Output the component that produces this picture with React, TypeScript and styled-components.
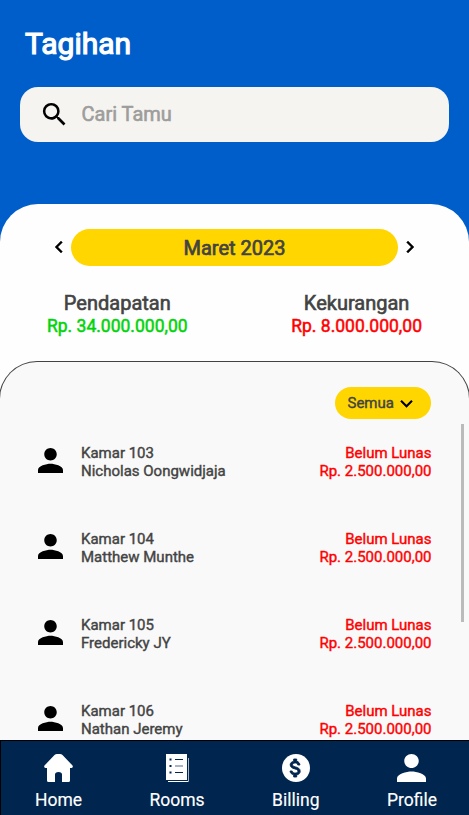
import React from "react";
import styled, { createGlobalStyle } from "styled-components";
import {
  MdAttachMoney,
  MdChevronLeft,
  MdChevronRight,
  MdKeyboardArrowDown,
  MdSearch,
} from "react-icons/md";

const GlobalStyle = createGlobalStyle`
  * { box-sizing: border-box; }
  body { margin: 0; font-family: Roboto, sans-serif; color: #434343; }
  h1, p, ul { margin: 0; padding: 0; }
  button { border: 0; padding: 0; background: none; font: inherit; color: inherit; }
`;

const Screen = styled.div`
  height: 815px;
  display: flex;
  flex-direction: column;
  overflow: hidden;
  background: #005ecb;
`;

const Header = styled.header`
  flex: none;
  height: 204px;
  padding: 26px 20px 0;
`;

const Title = styled.h1`
  padding-left: 5px;
  font-size: 30px;
  line-height: 36px;
  font-weight: 400;
  color: #fff;
  -webkit-text-stroke: 1.2px #fff;
`;

const SearchBox = styled.label`
  display: flex;
  align-items: center;
  height: 55px;
  margin-top: 25px;
  padding-left: 18px;
  border-radius: 18px;
  background: #f5f4f0;
  color: #000;
  svg { margin-left: 0.5px; }
`;

const SearchInput = styled.input`
  flex: 1;
  min-width: 0;
  height: 24px;
  margin: 0 0 1px 12px;
  padding: 0;
  border: 0;
  outline: 0;
  background: transparent;
  font: 400 20px/24px Roboto, sans-serif;
  &::placeholder {
    color: #9d9d9c;
    -webkit-text-stroke: 0.6px #9d9d9c;
  }
`;

const Panel = styled.main`
  flex: 1;
  min-height: 0;
  display: flex;
  flex-direction: column;
  padding-top: 25px;
  border-radius: 38px 38px 0 0;
  background: #fefefe;
`;

const MonthPicker = styled.div`
  flex: none;
  display: flex;
  align-items: center;
  justify-content: center;
  height: 37px;
`;

const ArrowButton = styled.button`
  display: flex;
  margin-bottom: 1px;
  color: #000;
  path:last-child { stroke: #000; stroke-width: 0.4px; }
`;

const Month = styled.div`
  width: 327px;
  height: 37px;
  border-radius: 19px;
  background: #ffd600;
  text-align: center;
  font-size: 20px;
  line-height: 38px;
  -webkit-text-stroke: 0.7px;
`;

const Totals = styled.section`
  flex: none;
  display: flex;
  justify-content: space-between;
  height: 95px;
  padding: 25px 47px 0;
  text-align: center;
`;

const TotalLabel = styled.p`
  font-size: 20px;
  line-height: 24px;
  -webkit-text-stroke: 0.6px;
`;

const TotalAmount = styled.p<{ $color: string }>`
  color: ${(p) => p.$color};
  font-size: 17.5px;
  line-height: 22px;
  -webkit-text-stroke: 0.5px;
`;

const ListPanel = styled.section`
  position: relative;
  flex: 1;
  min-height: 0;
  overflow: hidden;
  margin: 0 -1px;
  padding: 25px 38px 0;
  border: 1px solid #434343;
  border-bottom: 0;
  border-radius: 38px 38px 0 0;
  background: #f9f9f9;
`;

const Filter = styled.button`
  display: flex;
  align-items: center;
  width: 96px;
  height: 32px;
  margin-left: auto;
  padding-left: 12.5px;
  border-radius: 16px;
  background: #ffd600;
  font-size: 15px;
  -webkit-text-stroke: 0.4px;
  svg { color: #000; }
`;

const Guests = styled.ul`
  list-style: none;
  padding-top: 25px;
`;

const Guest = styled.li`
  display: flex;
  height: 86px;
  font-size: 15px;
  line-height: 18px;
  -webkit-text-stroke: 0.4px;
`;

const Avatar = styled.svg`
  width: 25px;
  height: 25px;
  margin-top: 4px;
  fill: #000;
  stroke: none;
`;

const GuestInfo = styled.div`
  margin-left: 18px;
`;

const Bill = styled.div`
  margin: 0 -0.5px 0 auto;
  text-align: right;
  color: #f00;
`;

const ScrollThumb = styled.div`
  position: absolute;
  top: 62px;
  right: 5px;
  width: 3px;
  height: 198px;
  background: #bbb;
`;

const Nav = styled.nav`
  flex: none;
  display: flex;
  justify-content: space-between;
  height: 75px;
  padding: 13px 32px 0 34px;
  border: solid #000;
  border-width: 1px 0 0 1px;
  background: #00254f;
  color: #fff;
`;

const NavItem = styled.button`
  display: flex;
  flex-direction: column;
  align-items: center;
  font-size: 17.5px;
  line-height: 22px;
  gap: 7px;
  -webkit-text-stroke: 0.15px;
`;

const NavIcon = styled.svg<{ $w?: number }>`
  display: block;
  width: ${(p) => p.$w ?? 28}px;
  height: 28px;
  fill: #fff;
`;

const DollarSign = styled(MdAttachMoney)`
  fill: #00254f;
  path:last-child { stroke: #00254f; stroke-width: 0.9px; }
`;

const PERSON =
  "M12 12c2.21 0 4-1.79 4-4s-1.79-4-4-4-4 1.79-4 4 1.79 4 4 4zm0 2c-2.67 0-8 1.34-8 4v2h16v-2c0-2.66-5.33-4-8-4z";

const guests = [
  { room: "Kamar 103", name: "Nicholas Oongwidjaja" },
  { room: "Kamar 104", name: "Matthew Munthe" },
  { room: "Kamar 105", name: "Fredericky JY" },
  { room: "Kamar 106", name: "Nathan Jeremy" },
];

export default function App() {
  return (
    <>
      <GlobalStyle />
      <Screen>
        <Header>
          <Title>Tagihan</Title>
          <SearchBox>
            <MdSearch size={31} />
            <SearchInput placeholder="Cari Tamu" />
          </SearchBox>
        </Header>
        <Panel>
          <MonthPicker>
            <ArrowButton><MdChevronLeft size={24} /></ArrowButton>
            <Month>Maret 2023</Month>
            <ArrowButton><MdChevronRight size={24} /></ArrowButton>
          </MonthPicker>
          <Totals>
            <div>
              <TotalLabel>Pendapatan</TotalLabel>
              <TotalAmount $color="#00d40a">Rp. 34.000.000,00</TotalAmount>
            </div>
            <div>
              <TotalLabel>Kekurangan</TotalLabel>
              <TotalAmount $color="#f00">Rp. 8.000.000,00</TotalAmount>
            </div>
          </Totals>
          <ListPanel>
            <Filter>
              Semua
              <MdKeyboardArrowDown size={25} />
            </Filter>
            <Guests>
              {guests.map((g) => (
                <Guest key={g.room}>
                  <Avatar viewBox="4 4 16 16"><path d={PERSON} /></Avatar>
                  <GuestInfo>
                    <p>{g.room}</p>
                    <p>{g.name}</p>
                  </GuestInfo>
                  <Bill>
                    <p>Belum Lunas</p>
                    <p>Rp. 2.500.000,00</p>
                  </Bill>
                </Guest>
              ))}
            </Guests>
            <ScrollThumb />
          </ListPanel>
        </Panel>
        <Nav>
          <NavItem>
            <NavIcon $w={29} viewBox="0 0 29 28">
              <path d="M10.500 1Q11.500 0 13 0h3Q17.500 0 18.500 1L28.500 11.500Q29.500 13.500 27.500 14H26V26.500Q26 28 24.500 28H18V20.500Q18 18 14.500 18T11 20.500V28H4.500Q3 28 3 26.500V14H1.500Q-.5 13.500 .5 11.500Z" />
            </NavIcon>
            Home
          </NavItem>
          <NavItem>
            <NavIcon $w={23} viewBox="0 0 23 28">
              <path d="M0 0H21V26H0Z" />
              <path d="M22.500 4V27" fill="none" stroke="#aab6c5" />
              <path d="M2 27.500H22.500" fill="none" stroke="#fff" />
              <path d="M9 5.500H17M9 18.500H17" stroke="#00254f" />
              <path d="M9 12H17" stroke="#8d9cb0" strokeWidth="1.500" />
              <path d="M3.500 5.500h2M3.500 12h2M3.500 18.500h2" stroke="#00254f" strokeWidth="2" />
            </NavIcon>
            Rooms
          </NavItem>
          <NavItem>
            <NavIcon viewBox="0 0 28 28">
              <circle cx="14" cy="14" r="14" />
              <DollarSign x={1.7} y={2} size={24} />
            </NavIcon>
            Billing
          </NavItem>
          <NavItem>
            <NavIcon $w={29} viewBox="4 4 16 16" preserveAspectRatio="none"><path d={PERSON} /></NavIcon>
            Profile
          </NavItem>
        </Nav>
      </Screen>
    </>
  );
}
